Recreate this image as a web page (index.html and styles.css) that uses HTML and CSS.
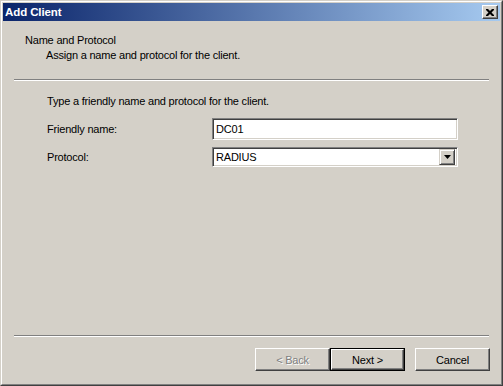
FILE: index.html
```html
<!DOCTYPE html>
<html>
<head>
<meta charset="utf-8">
<link rel="stylesheet" href="styles.css">
</head>
<body>
<div class="window">
  <div class="frame">
    <div class="titlebar">
      <span class="title">Add Client</span>
      <div class="close">
        <svg width="8" height="7" viewBox="0 0 8 7"><path d="M0 0h2l2 2 2-2h2v1l-2.5 2.5L8 6v1H6L4 5 2 7H0V6l2.5-2.5L0 1z" fill="#000"/></svg>
      </div>
    </div>
    <div class="header">
      <div class="h-title">Name and Protocol</div>
      <div class="h-sub">Assign a name and protocol for the client.</div>
    </div>
    <div class="sep"></div>
    <div class="body">
      <div class="intro">Type a friendly name and protocol for the client.</div>
      <div class="row row-name">
        <div class="label">Friendly name:</div>
        <div class="edit"><span>DC01</span></div>
      </div>
      <div class="row row-proto">
        <div class="label">Protocol:</div>
        <div class="combo">
          <span class="combo-text">RADIUS</span>
          <div class="arrow-btn"><svg width="7" height="4" viewBox="0 0 7 4"><path d="M0 0h7L3.5 4z" fill="#000"/></svg></div>
        </div>
      </div>
    </div>
    <div class="sep"></div>
    <div class="footer">
      <div class="btn disabled"><span>&lt; Back</span></div>
      <div class="btn default"><div class="btn-inner"><span>Next &gt;</span></div></div>
      <div class="btn cancel"><span>Cancel</span></div>
    </div>
  </div>
</div>
</body>
</html>
```

FILE: styles.css
```css
html, body {
  margin: 0;
  padding: 0;
  background: #d4d0c8;
}
body {
  font-family: "Liberation Sans", Arial, sans-serif;
  font-size: 11px;
  letter-spacing: -0.2px;
  color: #000;
}
.window {
  width: 503px;
  height: 386px;
  box-sizing: border-box;
  border: 1px solid;
  border-color: #d4d0c8 #404040 #404040 #d4d0c8;
  background: #d4d0c8;
}
.frame {
  height: 100%;
  box-sizing: border-box;
  border: 1px solid;
  border-color: #fff #808080 #808080 #fff;
  padding: 1px;
  display: flex;
  flex-direction: column;
}
.titlebar {
  height: 18px;
  flex: none;
  display: flex;
  align-items: center;
  padding-left: 2px;
  background: linear-gradient(to right, #0a246a, #a6caf0);
}
.title {
  color: #fff;
  font-weight: bold;
  font-size: 11.5px;
  letter-spacing: -0.1px;
  line-height: 18px;
}
.close {
  margin-left: auto;
  margin-right: 2px;
  width: 16px;
  height: 14px;
  box-sizing: border-box;
  border: 1px solid;
  border-color: #fff #404040 #404040 #fff;
  box-shadow: inset -1px -1px #808080;
  background: #d4d0c8;
  display: flex;
  align-items: center;
  justify-content: center;
  padding-right: 1px;
}
.close svg { display: block; }
.header {
  height: 58px;
  flex: none;
  box-sizing: border-box;
  padding: 12px 0 0 22px;
  line-height: 15px;
}
.h-sub {
  padding-left: 21px;
}
.sep {
  flex: none;
  margin: 0 11px;
  border-top: 1px solid #808080;
  border-bottom: 1px solid #fff;
  height: 0;
}
.body {
  flex: 1;
  padding: 13px 0 0 44px;
  line-height: 15px;
}
.intro {
  margin-bottom: 9px;
}
.row {
  display: flex;
  align-items: center;
}
.row-proto {
  margin-top: 7px;
}
.label {
  width: 165px;
}
.edit, .combo {
  width: 246px;
  box-sizing: border-box;
  border: 1px solid;
  border-color: #808080 #fff #fff #808080;
  box-shadow: inset 1px 1px #404040, inset -1px -1px #d4d0c8;
  background: #fff;
  display: flex;
  align-items: center;
  padding-left: 3px;
}
.edit {
  height: 22px;
}
.combo {
  height: 20px;
  padding-right: 2px;
}
.combo-text {
  flex: 1;
}
.arrow-btn {
  width: 16px;
  height: 16px;
  box-sizing: border-box;
  border: 1px solid;
  border-color: #d4d0c8 #404040 #404040 #d4d0c8;
  box-shadow: inset 1px 1px #fff, inset -1px -1px #808080;
  background: #d4d0c8;
  display: flex;
  align-items: center;
  justify-content: center;
}
.arrow-btn svg { display: block; }
.footer {
  flex: none;
  height: 46px;
  box-sizing: border-box;
  padding: 11px 10px 0 0;
  display: flex;
  justify-content: flex-end;
}
.btn {
  width: 75px;
  height: 23px;
  box-sizing: border-box;
  border: 1px solid;
  border-color: #fff #404040 #404040 #fff;
  box-shadow: inset -1px -1px #808080;
  background: #d4d0c8;
  display: flex;
  align-items: center;
  justify-content: center;
}
.btn.disabled span {
  color: #808080;
  text-shadow: 1px 1px #fff;
}
.btn.default {
  border: 1px solid #000;
  box-shadow: none;
  padding: 0;
}
.btn-inner {
  width: 100%;
  height: 100%;
  box-sizing: border-box;
  border: 1px solid;
  border-color: #fff #404040 #404040 #fff;
  box-shadow: inset -1px -1px #808080;
  display: flex;
  align-items: center;
  justify-content: center;
}
.btn.cancel {
  margin-left: 10px;
}
```
